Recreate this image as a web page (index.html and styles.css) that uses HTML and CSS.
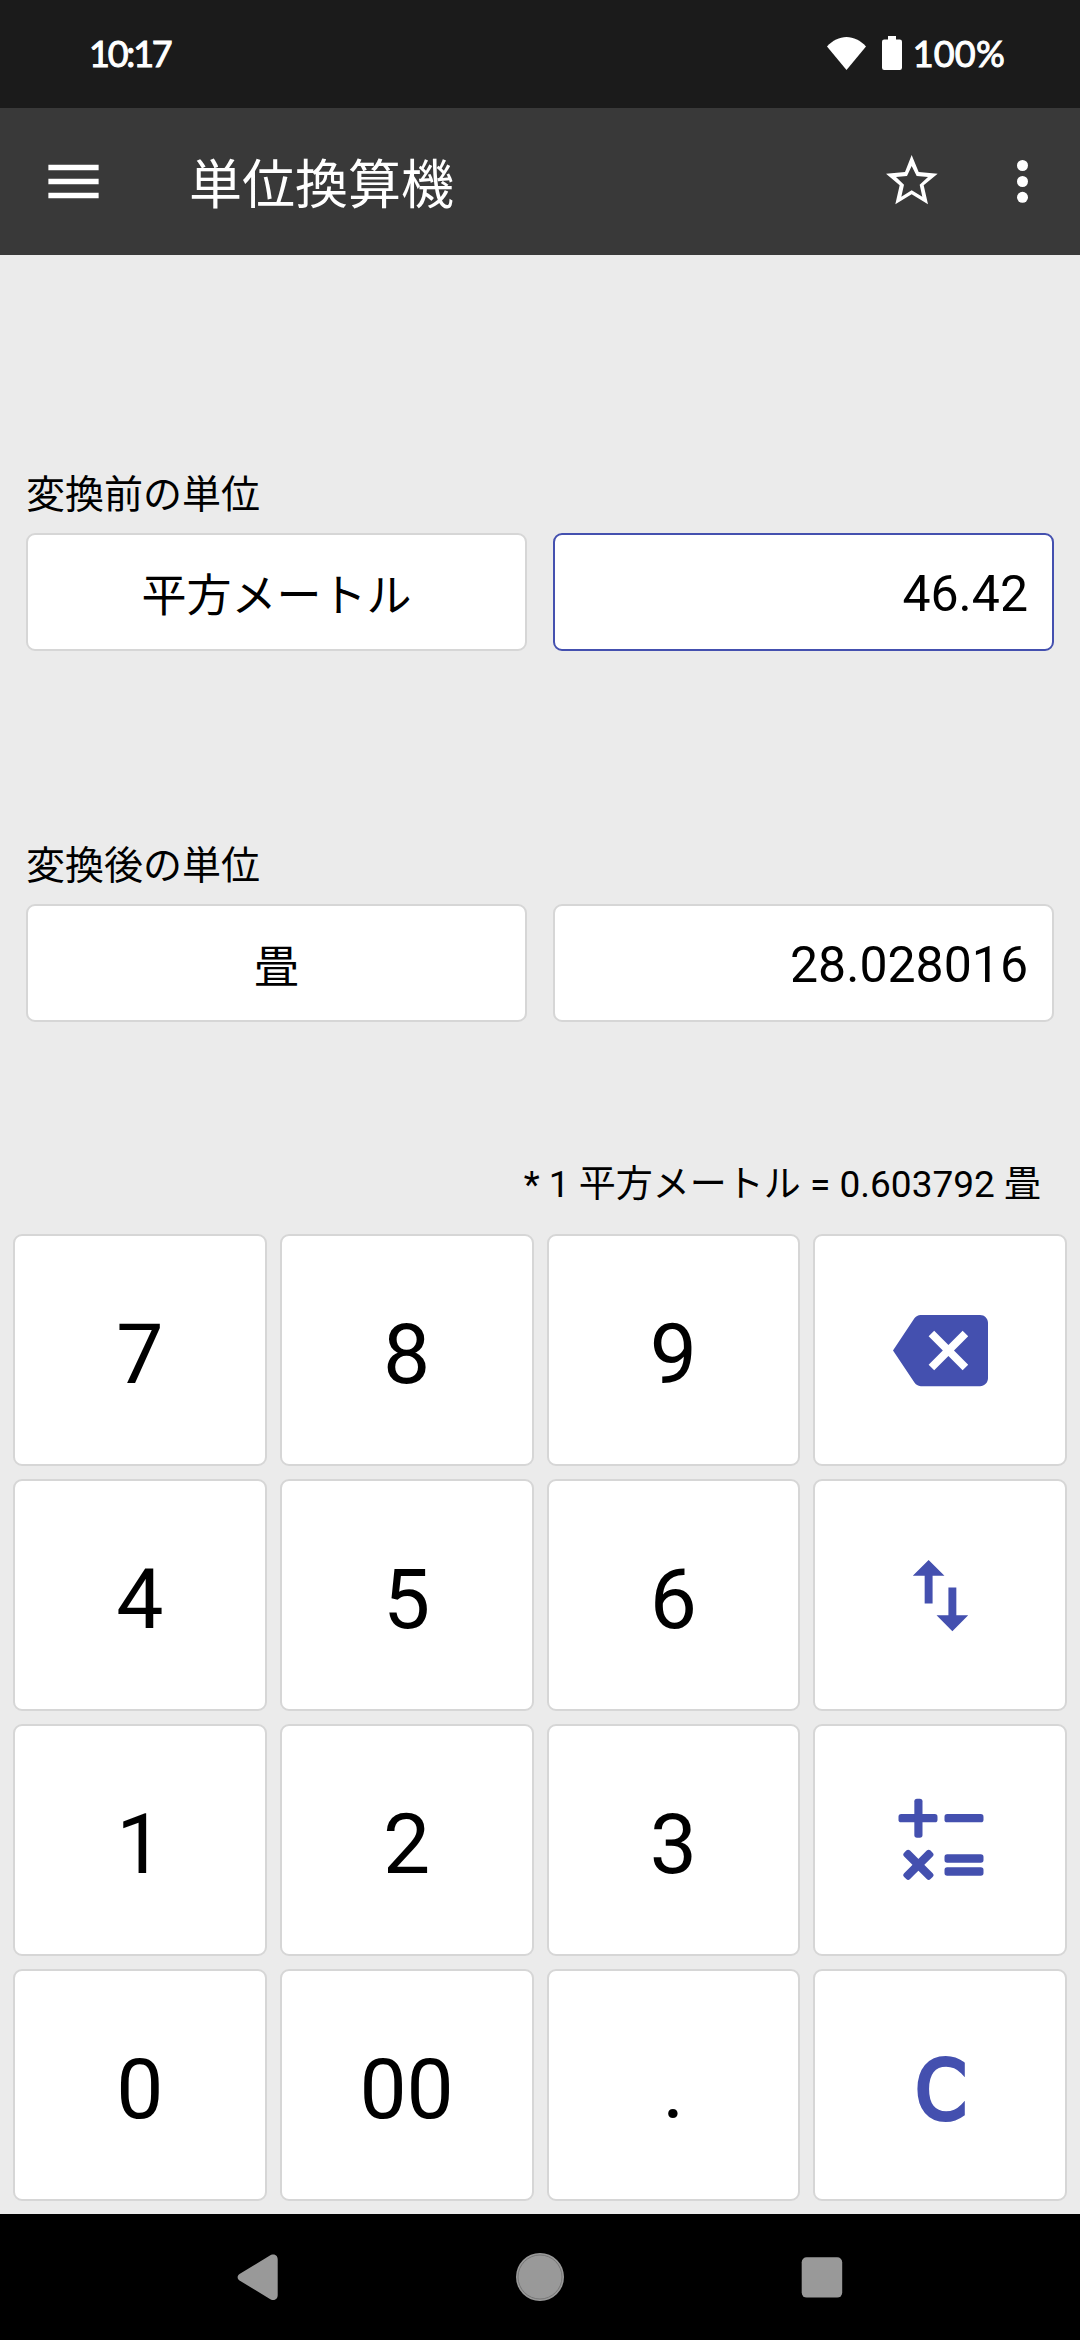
FILE: index.html
```html
<!DOCTYPE html>
<html lang="ja">
<head>
  <meta charset="utf-8">
  <title>単位換算機</title>
  <link rel="stylesheet" href="styles.css">
</head>
<body>
  <div class="status-bar">
    <div class="clock">10:17</div>
    <div class="status-icons">
      <svg class="wifi" width="39" height="33" viewBox="0 0 39 33"><path d="M0 9.5C5.500 3.500 12.500 0 19.500 0S33.500 3.500 39 9.500L19.500 33z" fill="#fff"/></svg>
      <svg class="battery" width="20" height="34" viewBox="0 0 20 34"><path d="M6 0h8v3.500h3.800a2.200 2.200 0 0 1 2.200 2.200v26.100a2.200 2.200 0 0 1-2.200 2.200H2.200A2.200 2.200 0 0 1 0 31.800V5.700a2.200 2.200 0 0 1 2.200-2.200H6z" fill="#fff"/></svg>
      <span class="battery-level">100%</span>
    </div>
  </div>

  <header class="header">
    <svg class="menu-icon" width="67" height="67" viewBox="0 0 24 24"><path d="M3 18h18v-2H3v2zm0-5h18v-2H3v2zm0-7v2h18V6H3z" fill="#fff"/></svg>
    <h1 class="header-title">単位換算機</h1>
    <div class="header-actions">
      <svg class="star-icon" width="52" height="50" viewBox="0 0 156 150"><path fill-rule="evenodd" fill="#fff" d="M77 0L98 51L155 56L113 91L126 148L77 118L28 148L41 91L0 56L57 51zM77 33L63 63L30 66L54 89L46 125L77 106L109 125L101 89L126 66L92 63z"/></svg>
      <svg width="11" height="43" viewBox="0 0 11 43"><g fill="#fff"><circle cx="5.500" cy="5.500" r="5.500"/><circle cx="5.500" cy="21.500" r="5.500"/><circle cx="5.500" cy="37.300" r="5.500"/></g></svg>
    </div>
  </header>

  <main class="converter">
    <section class="unit-group">
      <div class="unit-label">変換前の単位</div>
      <div class="unit-row">
        <div class="unit-button">平方メートル</div>
        <div class="unit-value active">46.42</div>
      </div>
    </section>

    <section class="unit-group">
      <div class="unit-label">変換後の単位</div>
      <div class="unit-row">
        <div class="unit-button">畳</div>
        <div class="unit-value">28.028016</div>
      </div>
    </section>

    <div class="rate">* 1 平方メートル = 0.603792 畳</div>
  </main>

  <div class="keypad">
    <div class="key">7</div>
    <div class="key">8</div>
    <div class="key">9</div>
    <div class="key key-icon">
      <svg width="95" height="95" viewBox="0 0 24 24"><path d="M22 3H7c-.69 0-1.230.35-1.590.88L0 12l5.410 8.110c.36.53.9.89 1.590.89h15c1.100 0 2-.9 2-2V5c0-1.100-.9-2-2-2zm-3 12.590L17.590 17 14 13.410 10.410 17 9 15.590 12.590 12 9 8.410 10.410 7 14 10.590 17.590 7 19 8.410 15.410 12 19 15.590z"/></svg>
    </div>

    <div class="key">4</div>
    <div class="key">5</div>
    <div class="key">6</div>
    <div class="key key-icon">
      <svg width="95" height="95" viewBox="0 0 24 24"><path d="M16 17.010V10h-2v7.010h-3L15 21l4-3.990h-3zM9 3L5 6.990h3V14h2V6.990h3L9 3z"/></svg>
    </div>

    <div class="key">1</div>
    <div class="key">2</div>
    <div class="key">3</div>
    <div class="key key-icon">
      <svg width="95" height="95" viewBox="0 0 285 285">
        <rect x="16.500" y="63" width="117" height="25" rx="8"/>
        <rect x="64" y="17" width="24.500" height="117" rx="8"/>
        <rect x="154.500" y="63" width="117" height="25" rx="8"/>
        <rect x="154.500" y="184" width="117" height="25" rx="8"/>
        <rect x="154.500" y="223" width="117" height="25" rx="8"/>
        <g transform="translate(76.200 215.500) rotate(45)">
          <rect x="-56" y="-12.500" width="112" height="25" rx="8"/>
          <rect x="-12.500" y="-56" width="25" height="112" rx="8"/>
        </g>
      </svg>
    </div>

    <div class="key">0</div>
    <div class="key">00</div>
    <div class="key">.</div>
    <div class="key key-clear">C</div>
  </div>

  <nav class="nav-bar">
    <svg width="48" height="48" viewBox="0 0 48 48"><path d="M35.500 2.800C38.500.5 43.700 1 43.700 6.500v35.500c0 5.500-5.200 6-8.200 3.700L5.500 27.500c-2.500-1.600-2.500-4.900 0-6.500z"/></svg>
    <svg width="48" height="48" viewBox="0 0 48 48"><circle cx="24" cy="24" r="24"/><circle class="ring" cx="24" cy="24" r="22"/></svg>
    <svg width="48" height="48" viewBox="0 0 48 48"><rect x="3.700" y="4.300" width="40.500" height="40.300" rx="5"/></svg>
  </nav>
</body>
</html>
```
FILE: styles.css
```css
* {
  box-sizing: border-box;
}

body {
  width: 1080px;
  height: 2340px;
  margin: 0;
  display: flex;
  flex-direction: column;
  overflow: hidden;
  background-color: #ebebeb;
  color: #000;
  font-family: Roboto, "Noto Sans CJK JP", sans-serif;
}

svg {
  display: block;
  flex: none;
}

.status-bar {
  height: 108px;
  padding: 0 75px 2px 89px;
  display: flex;
  align-items: center;
  justify-content: space-between;
  background-color: #1b1b1b;
  color: #fff;
  font-family: Lato, sans-serif;
  font-size: 36px;
  -webkit-text-stroke: 1px #fff;
}

.clock {
  letter-spacing: -2.2px;
}

.status-icons {
  display: flex;
  align-items: center;
}

.wifi {
  margin-right: 16px;
}

.battery {
  margin-right: 11px;
}

.battery-level {
  letter-spacing: 0.2px;
}

.header {
  height: 147px;
  padding: 0 52px 0 40px;
  display: flex;
  align-items: center;
  background-color: #393939;
  color: #fff;
}

.header-title {
  margin: 8px 0 0 82px;
  flex: 1;
  font-size: 53px;
  font-weight: 400;
  line-height: 80px;
}

.header-actions {
  display: flex;
  align-items: center;
  gap: 79px;
}

.star-icon {
  margin-bottom: 4px;
}

.converter {
  height: 979px;
  padding: 210px 26px 0;
}

.unit-group {
  height: 371px;
}

.unit-label {
  height: 68px;
  font-size: 39px;
  line-height: 60px;
}

.unit-row {
  display: grid;
  grid-template-columns: 1fr 1fr;
  gap: 26px;
}

.unit-button,
.unit-value {
  height: 118px;
  border: 2px solid #d6d6d6;
  border-radius: 9px;
  background-color: #fff;
  line-height: 118px;
}

.unit-button {
  font-size: 45px;
  line-height: 123px;
  text-align: center;
}

.unit-value {
  padding-right: 24px;
  font-size: 50px;
  text-align: right;
}

.unit-value.active {
  border-color: #4450af;
}

.rate {
  margin-top: -52px;
  padding-right: 13px;
  font-size: 37px;
  line-height: 60px;
  text-align: right;
}

.keypad {
  height: 980px;
  padding: 0 13px 13px;
  display: grid;
  grid-template-columns: repeat(4, 1fr);
  grid-template-rows: repeat(4, 232px);
  gap: 13px;
}

.key {
  padding-top: 8px;
  display: flex;
  align-items: center;
  justify-content: center;
  border: 2px solid #d6d6d6;
  border-radius: 9px;
  background-color: #fff;
  font-size: 84px;
}

.key-icon {
  padding-top: 0;
  fill: #4450af;
}

.key-clear {
  padding: 11px 0 0 2px;
  color: #4450af;
  font-family: "DejaVu Sans Condensed", "DejaVu Sans", sans-serif;
  font-size: 82px;
  -webkit-text-stroke: 4px #4450af;
}

.nav-bar {
  height: 126px;
  display: flex;
  align-items: center;
  justify-content: center;
  gap: 234px;
  background-color: #000;
  fill: #999;
}

.ring {
  fill: none;
  stroke: #777;
  stroke-width: 1px;
}
```
